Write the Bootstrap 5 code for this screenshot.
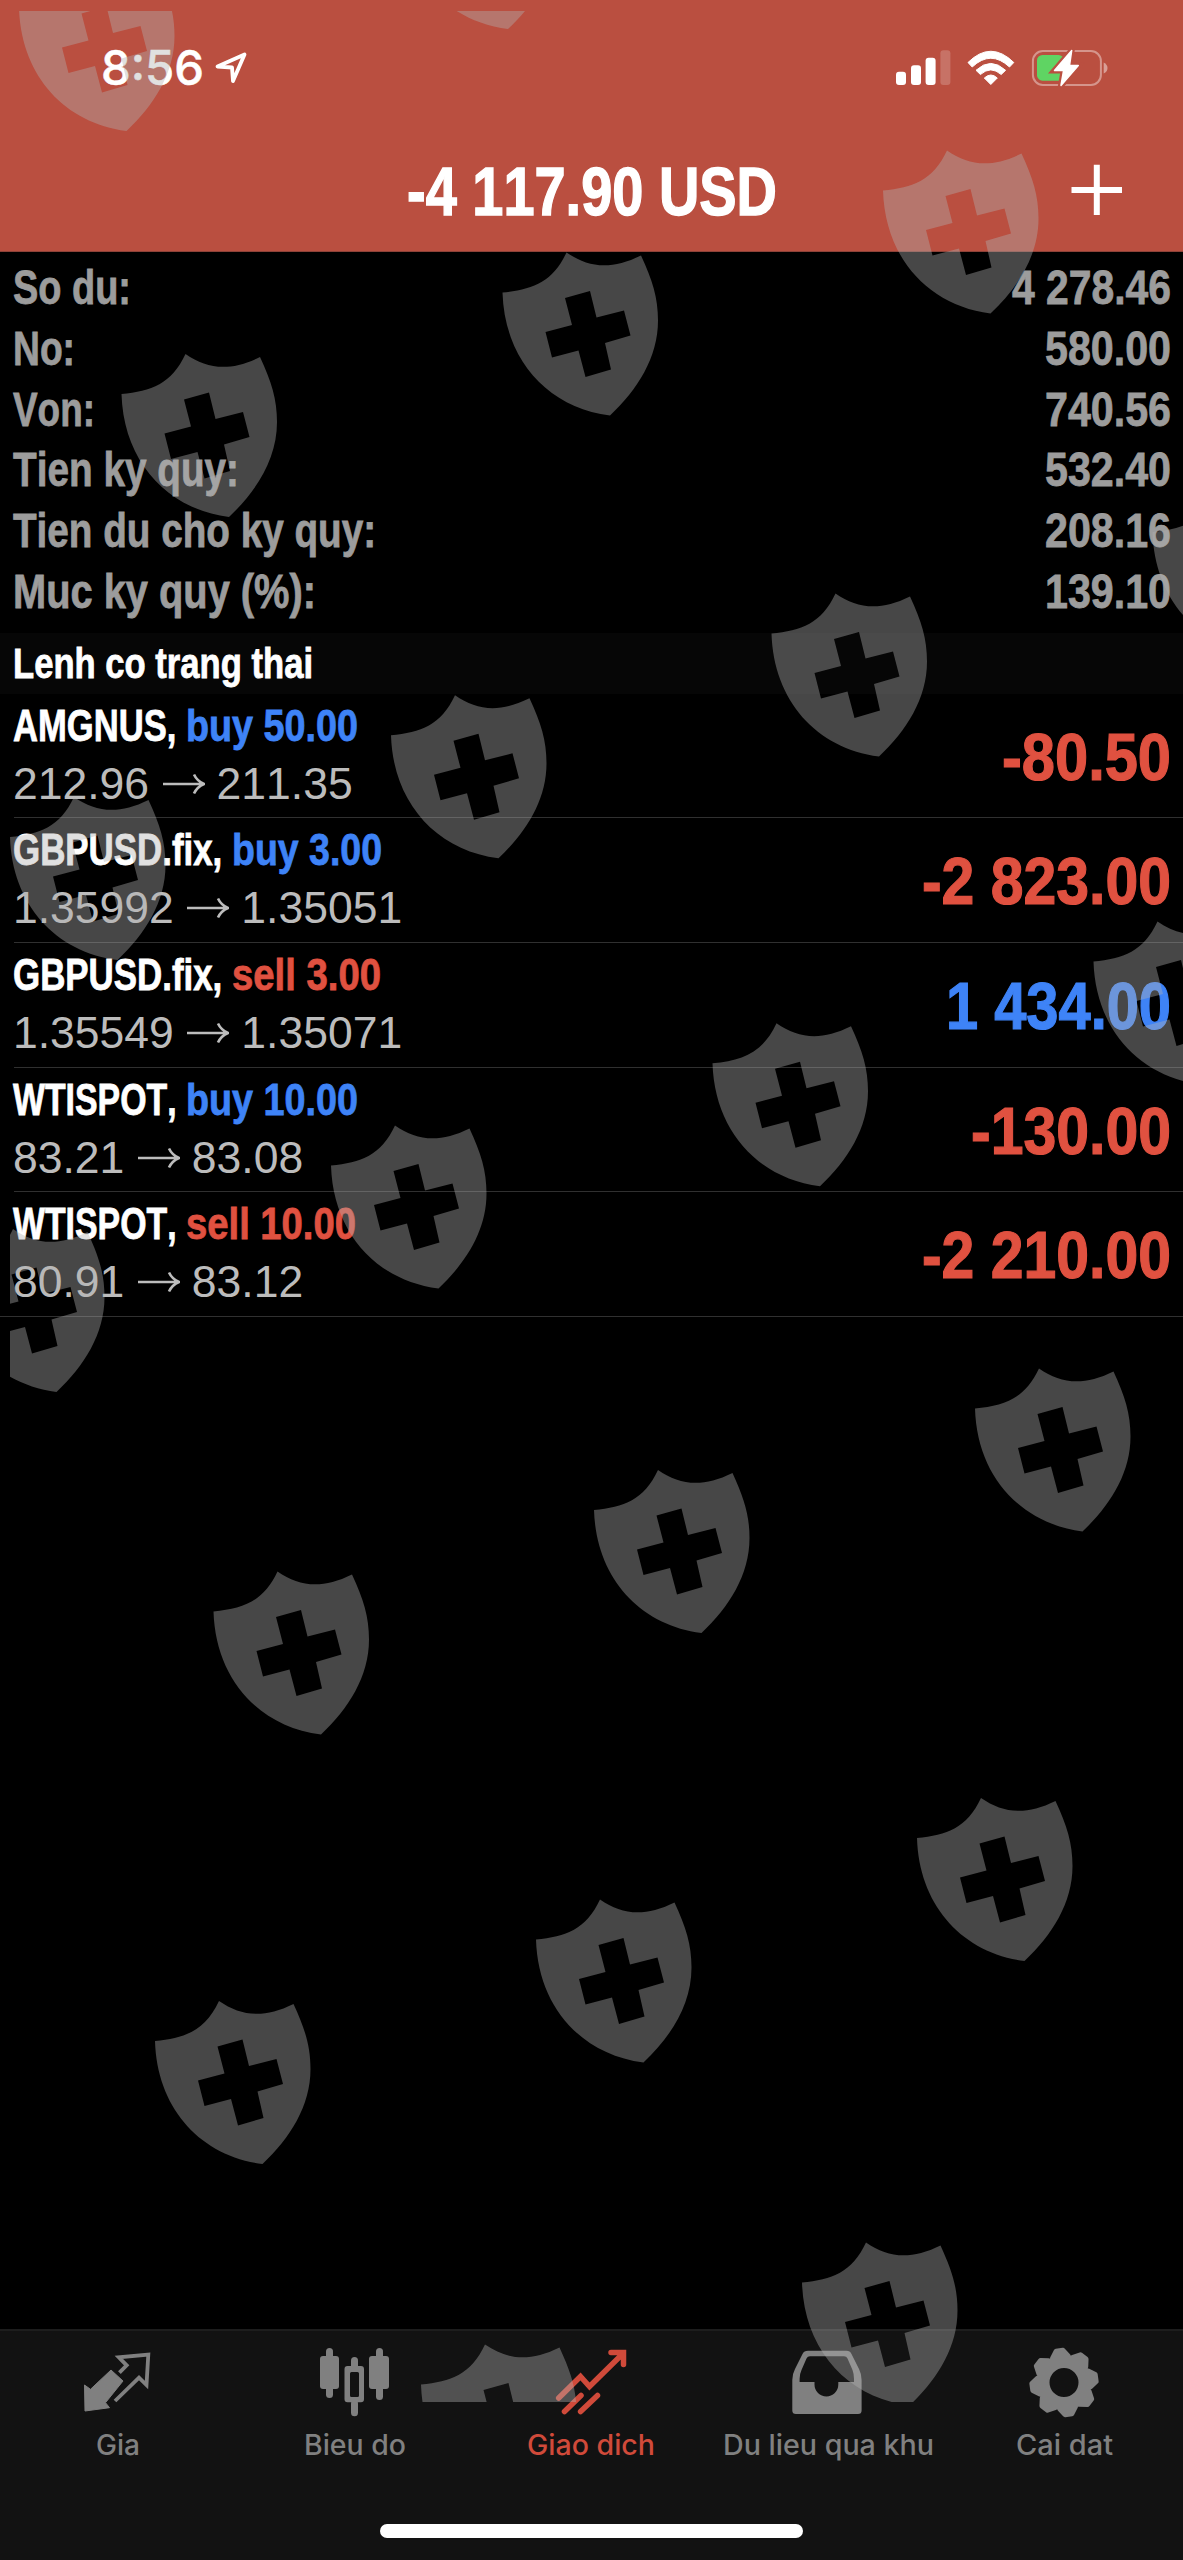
<!DOCTYPE html>
<html lang="vi" data-bs-theme="dark">
<head>
<meta charset="utf-8">
<meta name="viewport" content="width=device-width, initial-scale=1">
<title>Giao dich</title>
<link href="https://cdn.jsdelivr.net/npm/bootstrap@5.3.0/dist/css/bootstrap.min.css" rel="stylesheet">
<style>
  body { background:#000; color:#fff; font-family:"Liberation Sans",Arial,sans-serif; margin:0; }
  .screen { width:1183px; height:2560px; overflow:hidden; }
  .fit { display:inline-block; white-space:pre; transform-origin:0 50%; font-kerning:none; }
  .topbar { height:252px; background:#ba4f40; border-bottom:1px solid #8d4238; }
  .statusbar { height:136px; padding:0 75px 0 101px; }
  .clock { font:500 48px/60px Inter,sans-serif; -webkit-text-stroke:.5px; }
  .titlebar { height:112px; }
  .title { font-size:69px; font-weight:700; line-height:112px; -webkit-text-stroke:1.4px; }
  .plus { right:60px; top:24px; }
  .summary { padding:6px 12.5px 10px 13px; font-size:48px; font-weight:700; line-height:60.8px; color:#9c9c9c; -webkit-text-stroke:.8px; }
  .summary > div { height:60.8px; }
  .section-head { height:61px; line-height:61px; padding-left:13px; background:#060606; font-size:43px; font-weight:700; -webkit-text-stroke:.8px; }
  .deal { height:124.6px; padding:0 12.5px 0 13px; position:relative; }
  .deal::after { content:""; position:absolute; left:14px; right:0; bottom:0; height:1px; background:#303030; }
  .deal:last-child::after { left:0; }
  .deal-info { padding-top:3px; }
  .symbol-line { height:58px; font-size:45px; line-height:58px; font-weight:700; -webkit-text-stroke:.8px; }
  .price-line { height:58px; font-size:44.5px; line-height:58px; color:#bcbcbc; font-kerning:none; }
  .price-line svg { margin:0 12px 0 13.5px; }
  .amount { font-size:66px; font-weight:700; line-height:126px; -webkit-text-stroke:1.2px; }
  .buy { color:#3e83f7; }
  .sell { color:#e05140; }
  .tabbar { height:231px; background:#121212; border-top:2px solid #1d1d1d; color:#808080; }
  .tab-item { width:20%; padding-top:11px; font:500 28px/34px Inter,sans-serif; }
  .tab-item svg { margin-bottom:6px; }
  .tab-item.active { color:#d04a3a; }
  .home-bar { width:423px; height:14px; border-radius:7px; background:#fff; margin-bottom:22px; }
  .watermark { left:10px; top:11px; pointer-events:none; }
</style>
<script src="https://cdn.jsdelivr.net/npm/bootstrap@5.3.0/dist/js/bootstrap.bundle.min.js"></script>
</head>
<body>
<div class="screen position-relative d-flex flex-column">
  <header class="topbar flex-shrink-0">
    <div class="statusbar d-flex align-items-center justify-content-between">
      <div class="d-flex align-items-center">
        <span class="clock fit" data-w="103">8:56</span>
        <svg class="ms-2" width="38" height="38" viewBox="212 48 38 38" fill="none" stroke="#fff" stroke-width="3.8" stroke-linejoin="round"><path d="M217.5 65.5L244.5 53.5L233 80L232 66.5Z"/></svg>
      </div>
      <svg width="213" height="40" viewBox="895 47 213 40" fill="#fff">
        <rect x="896" y="70.7" width="10" height="13.3" rx="3"/><rect x="911" y="64.3" width="10" height="19.7" rx="3"/><rect x="925.6" y="56.7" width="10" height="27.3" rx="3"/><rect x="940.4" y="49.3" width="10" height="34.7" rx="3" opacity=".2"/>
        <path d="M968 61.5Q990.800 39 1013.800 61.500L1009.500 66Q990.800 48.500 972.200 66Z" stroke="#fff" stroke-width="1" stroke-linejoin="round"/>
        <path d="M976 69.300Q990.800 55.500 1005.600 69.300L1001.200 73.500Q990.800 64.300 980.400 73.500Z" stroke="#fff" stroke-width="1" stroke-linejoin="round"/>
        <path d="M984.300 77Q990.800 71 997.300 77L990.800 83.500Z" stroke="#fff" stroke-width="1" stroke-linejoin="round"/>
        <rect x="1032.900" y="50" width="68" height="34" rx="10" fill="none" stroke="#fff" stroke-width="2" opacity=".4"/>
        <path d="M1103.700 61.500Q1107.500 63.500 1107.500 67T1103.700 72.500Z" opacity=".45"/>
        <rect x="1037" y="54" width="27" height="25.700" rx="5.500" fill="#5fd463"/>
        <path d="M1071.700 49.500L1054.500 69.500H1063.600L1061 84.500L1078.300 64.600H1069.500Z" stroke="#ba4f40" stroke-width="6"/>
        <path d="M1071.700 49.500L1054.500 69.500H1063.600L1061 84.500L1078.300 64.600H1069.500Z" stroke="#fff" stroke-width="1.500" stroke-linejoin="round"/>
      </svg>
    </div>
    <div class="titlebar d-flex justify-content-center position-relative">
      <span class="title fit" data-w="370">-4 117.90 USD</span>
      <svg class="plus position-absolute" width="52" height="60" viewBox="0 0 52 60" stroke="#fff" stroke-width="6"><path d="M0.500 30H51M25.800 4.700V55"/></svg>
    </div>
  </header>

  <main class="flex-grow-1">
    <section class="summary">
      <div class="d-flex justify-content-between"><span class="fit" data-w="118">So du:</span><span class="fit" data-w="159">4 278.46</span></div>
      <div class="d-flex justify-content-between"><span class="fit" data-w="62">No:</span><span class="fit" data-w="126">580.00</span></div>
      <div class="d-flex justify-content-between"><span class="fit" data-w="82">Von:</span><span class="fit" data-w="126">740.56</span></div>
      <div class="d-flex justify-content-between"><span class="fit" data-w="226">Tien ky quy:</span><span class="fit" data-w="126">532.40</span></div>
      <div class="d-flex justify-content-between"><span class="fit" data-w="363">Tien du cho ky quy:</span><span class="fit" data-w="126">208.16</span></div>
      <div class="d-flex justify-content-between"><span class="fit" data-w="303">Muc ky quy (%):</span><span class="fit" data-w="126">139.10</span></div>
    </section>
    <div class="section-head"><span class="fit" data-w="300">Lenh co trang thai</span></div>
    <section>
      <div class="deal d-flex justify-content-between">
        <div class="deal-info">
          <div class="symbol-line d-flex"><span class="fit" data-w="173">AMGNUS, </span><span class="buy fit" data-w="172">buy 50.00</span></div>
          <div class="price-line d-flex align-items-center">212.96<svg width="42" height="24" viewBox="0 0 42 24" fill="none" stroke="#bcbcbc" stroke-width="2.600"><path d="M0 12H40M31 2.500Q34 9 41 12Q34 15 31 21.500"/></svg>211.35</div>
        </div>
        <span class="amount sell fit" data-w="169">-80.50</span>
      </div>
      <div class="deal d-flex justify-content-between">
        <div class="deal-info">
          <div class="symbol-line d-flex"><span class="fit" data-w="219">GBPUSD.fix, </span><span class="buy fit" data-w="150">buy 3.00</span></div>
          <div class="price-line d-flex align-items-center">1.35992<svg width="42" height="24" viewBox="0 0 42 24" fill="none" stroke="#bcbcbc" stroke-width="2.600"><path d="M0 12H40M31 2.500Q34 9 41 12Q34 15 31 21.500"/></svg>1.35051</div>
        </div>
        <span class="amount sell fit" data-w="249">-2 823.00</span>
      </div>
      <div class="deal d-flex justify-content-between">
        <div class="deal-info">
          <div class="symbol-line d-flex"><span class="fit" data-w="219">GBPUSD.fix, </span><span class="sell fit" data-w="149">sell 3.00</span></div>
          <div class="price-line d-flex align-items-center">1.35549<svg width="42" height="24" viewBox="0 0 42 24" fill="none" stroke="#bcbcbc" stroke-width="2.600"><path d="M0 12H40M31 2.500Q34 9 41 12Q34 15 31 21.500"/></svg>1.35071</div>
        </div>
        <span class="amount buy fit" data-w="225">1 434.00</span>
      </div>
      <div class="deal d-flex justify-content-between">
        <div class="deal-info">
          <div class="symbol-line d-flex"><span class="fit" data-w="173">WTISPOT, </span><span class="buy fit" data-w="172">buy 10.00</span></div>
          <div class="price-line d-flex align-items-center">83.21<svg width="42" height="24" viewBox="0 0 42 24" fill="none" stroke="#bcbcbc" stroke-width="2.600"><path d="M0 12H40M31 2.500Q34 9 41 12Q34 15 31 21.500"/></svg>83.08</div>
        </div>
        <span class="amount sell fit" data-w="200">-130.00</span>
      </div>
      <div class="deal d-flex justify-content-between">
        <div class="deal-info">
          <div class="symbol-line d-flex"><span class="fit" data-w="173">WTISPOT, </span><span class="sell fit" data-w="170">sell 10.00</span></div>
          <div class="price-line d-flex align-items-center">80.91<svg width="42" height="24" viewBox="0 0 42 24" fill="none" stroke="#bcbcbc" stroke-width="2.600"><path d="M0 12H40M31 2.500Q34 9 41 12Q34 15 31 21.500"/></svg>83.12</div>
        </div>
        <span class="amount sell fit" data-w="249">-2 210.00</span>
      </div>
    </section>
  </main>

  <footer class="tabbar flex-shrink-0 d-flex flex-column justify-content-between align-items-center">
    <nav class="d-flex w-100">
      <div class="tab-item d-flex flex-column align-items-center">
        <svg width="80" height="80" viewBox="78 2342 80 80"><path d="M84.500 2385L90.500 2389.300L111 2370L123 2381L105.500 2402.700L109.500 2407.700L85 2411Z" fill="currentColor" stroke="currentColor" stroke-linejoin="round"/><path d="M119.400 2372.700L126.700 2365.300L118.800 2357.300L148.300 2354.500L146.500 2385L139 2377.700L115 2401" fill="none" stroke="currentColor" stroke-width="3.800"/></svg>
        <span class="fit" data-w="44">Gia</span>
      </div>
      <div class="tab-item d-flex flex-column align-items-center">
        <svg width="80" height="80" viewBox="315 2342 80 80" fill="currentColor"><rect x="326" y="2348" width="7" height="50" rx="3.500"/><rect x="320" y="2356" width="19" height="33" rx="3"/><rect x="351" y="2357" width="7" height="12" rx="3.500"/><rect x="351" y="2400" width="7" height="16.300" rx="3.500"/><path fill-rule="evenodd" d="M347.500 2366H361Q364 2366 364 2369V2399.300Q364 2402.300 361 2402.300H347.500Q344.500 2402.300 344.500 2399.300V2369Q344.500 2366 347.500 2366ZM351.500 2372Q350 2372 350 2373.500V2395.500Q350 2397 351.500 2397H357.500Q359 2397 359 2395.500V2373.500Q359 2372 357.500 2372Z"/><rect x="376" y="2348" width="7" height="52" rx="3.500"/><rect x="369" y="2356" width="20" height="33" rx="3"/></svg>
        <span class="fit" data-w="102">Bieu do</span>
      </div>
      <div class="tab-item active d-flex flex-column align-items-center">
        <svg width="80" height="80" viewBox="551 2342 80 80" fill="none" stroke="currentColor" stroke-width="5.500" stroke-linecap="round"><path d="M558.700 2398L580.500 2376.500L589.500 2386.500L623 2353.500M611 2352.500H623.500V2364.500M564.500 2411.500L581 2395.500M580.600 2411.500L597.500 2395.500"/></svg>
        <span class="fit" data-w="128">Giao dich</span>
      </div>
      <div class="tab-item d-flex flex-column align-items-center">
        <svg width="80" height="80" viewBox="788 2342 80 80" fill="currentColor"><path fill-rule="evenodd" d="M808 2350.700H846.500Q850 2350.700 851.500 2354L859 2369Q861.600 2374 861.600 2380V2410.500Q861.600 2414 858 2414H796Q792.300 2414 792.300 2410.500V2380Q792.300 2374 795 2369L802.500 2354Q804 2350.700 808 2350.700ZM810 2356.300Q807.500 2356.300 806.500 2358.500L801.500 2370Q799.600 2374 799.600 2379V2382H814.500V2384.500A11.900 11.900 0 0 0 838.300 2384.500V2382H854V2379Q854 2374 852.500 2370L847.500 2358.500Q846.500 2356.300 844 2356.300Z"/></svg>
        <span class="fit" data-w="211">Du lieu qua khu</span>
      </div>
      <div class="tab-item d-flex flex-column align-items-center">
        <svg width="80" height="80" viewBox="-39 -40.500 80 80">
          <defs><path id="tooth" d="M-8 -25.500L-3.500 -32H3.500L8 -25.500Z" fill="currentColor" stroke="currentColor" stroke-width="5" stroke-linejoin="round"/></defs>
          <circle r="21" fill="none" stroke="currentColor" stroke-width="13"/>
          <g transform="rotate(-8)"><use href="#tooth"/><use href="#tooth" transform="rotate(45)"/><use href="#tooth" transform="rotate(90)"/><use href="#tooth" transform="rotate(135)"/><use href="#tooth" transform="rotate(180)"/><use href="#tooth" transform="rotate(225)"/><use href="#tooth" transform="rotate(270)"/><use href="#tooth" transform="rotate(315)"/></g>
        </svg>
        <span class="fit" data-w="97">Cai dat</span>
      </div>
    </nav>
    <div class="home-bar"></div>
  </footer>

  <!-- translucent shields laid over the whole screen -->
  <svg class="watermark position-absolute" width="1173" height="2391" viewBox="10 11 1173 2391" fill="rgb(178,178,178)" fill-opacity=".4">
    <defs><path id="shield" fill-rule="evenodd" d="M0 0C30 -3 50 -10 64 -40C86 -25 108 -22 138.500 -37C150 -12 155.500 5 155.500 28C155.500 65 135 97 107.500 123C45 115 2 67 0 0ZM62.500 5.500L69.500 32.500L43 39.500L49.500 65L76 58L83 84.500L108.500 77L102.500 50.500L128 43L121.500 18L94 25L87.500 -1.500Z"/></defs>
    <use href="#shield" x="19" y="8"/><use href="#shield" x="400.500" y="-94"/>
    <use href="#shield" x="883" y="190.500"/><use href="#shield" x="502.500" y="292.500"/><use href="#shield" x="121.500" y="394"/>
    <use href="#shield" x="1152.500" y="532"/><use href="#shield" x="771.500" y="633.500"/><use href="#shield" x="391" y="735.300"/><use href="#shield" x="10" y="837"/>
    <use href="#shield" x="1093.500" y="961.500"/><use href="#shield" x="712.500" y="1063.300"/><use href="#shield" x="331" y="1165.500"/><use href="#shield" x="-51" y="1269"/>
    <use href="#shield" x="975" y="1408.500"/><use href="#shield" x="594" y="1510"/><use href="#shield" x="213.500" y="1611.500"/>
    <use href="#shield" x="917" y="1838"/><use href="#shield" x="536" y="1939.500"/><use href="#shield" x="155" y="2041"/>
    <use href="#shield" x="802" y="2282.500"/><use href="#shield" x="421" y="2384.500"/>
  </svg>
</div>
<script>
  // Condense each label horizontally to its data-w width
  document.querySelectorAll('.fit').forEach(function (el) {
    var natural = el.getBoundingClientRect().width, w = +el.dataset.w;
    el.style.transform = 'scaleX(' + w / natural + ')';
    el.style.marginRight = (w - natural) + 'px';
  });
</script>
</body>
</html>
